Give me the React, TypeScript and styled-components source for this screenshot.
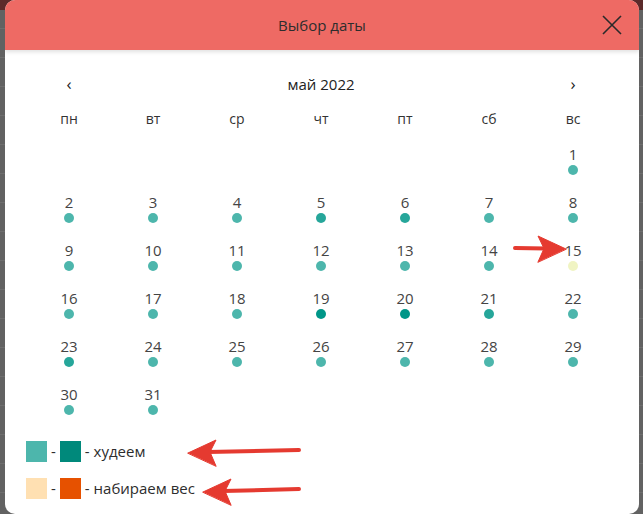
import React from "react";
import styled, { createGlobalStyle } from "styled-components";

const GlobalStyle = createGlobalStyle`
  html, body { margin: 0; padding: 0; }
  body {
    width: 643px;
    height: 514px;
    overflow: hidden;
    font-family: "Open Sans", "Noto Sans", sans-serif;
    background:
      linear-gradient(#5b2a2a 0, #5b2a2a 10px, transparent 10px),
      repeating-linear-gradient(#626262 0, #626262 28px, #6e6e6e 28px, #6e6e6e 29px);
    background-color: #636363;
  }
`;

const Page = styled.div`
  position: relative;
  width: 643px;
  height: 514px;
  padding: 0 4px 0 5px;
  box-sizing: border-box;
`;

const Modal = styled.div`
  width: 634px;
  height: 514px;
  background: #fff;
  border-radius: 10px;
  overflow: hidden;
  display: flex;
  flex-direction: column;
`;

const Header = styled.div`
  height: 50px;
  flex: none;
  background: #ee6a64;
  box-shadow: 0 2px 4px rgba(0, 0, 0, 0.12);
  display: grid;
  grid-template-columns: 1fr auto 1fr;
  align-items: center;
  position: relative;
  z-index: 1;
`;

const Title = styled.div`
  grid-column: 2;
  font-size: 15px;
  color: #2d2d2d;
  line-height: 20px;
`;

const Close = styled.button`
  grid-column: 3;
  justify-self: end;
  margin-right: 16px;
  width: 22px;
  height: 22px;
  padding: 0;
  border: 0;
  background: transparent;
  display: flex;
  align-items: center;
  justify-content: center;
`;

const Body = styled.div`
  padding: 16px 24px 0 22px;
  display: flex;
  flex-direction: column;
`;

const NavRow = styled.div`
  height: 36px;
  display: grid;
  grid-template-columns: 84px 1fr 84px;
  align-items: center;
  text-align: center;
`;

const NavArrow = styled.span`
  font-size: 17px;
  color: #222;
  line-height: 20px;
`;

const MonthLabel = styled.span`
  font-size: 15px;
  font-weight: 500;
  color: #222;
`;

const Grid = styled.div`
  display: grid;
  grid-template-columns: repeat(7, 84px);
`;

const WeekDay = styled.div`
  height: 36px;
  box-sizing: border-box;
  padding-bottom: 3px;
  display: flex;
  align-items: center;
  justify-content: center;
  font-size: 14px;
  color: #333;
`;

const DayCell = styled.div`
  height: 48px;
  box-sizing: border-box;
  padding-top: 6px;
  display: flex;
  flex-direction: column;
  align-items: center;
  gap: 1px;
`;

const DayNum = styled.span`
  font-size: 15px;
  line-height: 20px;
  color: #444;
`;

const Dot = styled.span<{ $color: string }>`
  width: 10px;
  height: 10px;
  border-radius: 50%;
  background: ${(p) => p.$color};
`;

const Legend = styled.div`
  margin-top: 15px;
  margin-left: -1px;
  display: flex;
  flex-direction: column;
  gap: 16px;
`;

const LegendRow = styled.div`
  display: flex;
  align-items: center;
  gap: 4px;
  font-size: 15px;
  color: #2d2d2d;
  line-height: 21px;
`;

const Swatch = styled.span<{ $color: string }>`
  width: 21px;
  height: 21px;
  background: ${(p) => p.$color};
`;

const Annotations = styled.svg`
  position: absolute;
  left: 0;
  top: 0;
  pointer-events: none;
`;

const LIGHT = "#4db6ac";
const MID = "#26a69a";
const DARK = "#009688";
const TODAY = "#f0f4c3";

const special: Record<number, string> = {
  5: MID,
  6: MID,
  15: TODAY,
  19: DARK,
  20: DARK,
  21: MID,
  23: MID,
};

const weekDays = ["пн", "вт", "ср", "чт", "пт", "сб", "вс"];

export default function App() {
  const offset = 6; // May 1, 2022 is Sunday
  const cells: (number | null)[] = [];
  for (let i = 0; i < offset; i++) cells.push(null);
  for (let d = 1; d <= 31; d++) cells.push(d);

  return (
    <>
      <GlobalStyle />
      <Page>
        <Modal>
          <Header>
            <Title>Выбор даты</Title>
            <Close aria-label="close">
              <svg width="20" height="20" viewBox="0 0 20 20">
                <path d="M1 1 L19 19 M19 1 L1 19" stroke="#2a2a2a" strokeWidth="1.6" fill="none" />
              </svg>
            </Close>
          </Header>
          <Body>
            <NavRow>
              <NavArrow>‹</NavArrow>
              <MonthLabel>май 2022</MonthLabel>
              <NavArrow>›</NavArrow>
            </NavRow>
            <Grid>
              {weekDays.map((w) => (
                <WeekDay key={w}>{w}</WeekDay>
              ))}
              {cells.map((d, i) =>
                d === null ? (
                  <DayCell key={"e" + i} />
                ) : (
                  <DayCell key={d}>
                    <DayNum>{d}</DayNum>
                    <Dot $color={special[d] ?? LIGHT} />
                  </DayCell>
                )
              )}
            </Grid>
            <Legend>
              <LegendRow>
                <Swatch $color="#4db6ac" />
                <span>-</span>
                <Swatch $color="#00897b" />
                <span>- худеем</span>
              </LegendRow>
              <LegendRow>
                <Swatch $color="#ffe0b2" />
                <span>-</span>
                <Swatch $color="#e65100" />
                <span>- набираем вес</span>
              </LegendRow>
            </Legend>
          </Body>
        </Modal>
        <Annotations width="643" height="514" viewBox="0 0 643 514">
          <g fill="#e53a30" stroke="#e53a30" strokeLinecap="round">
            <line x1="299" y1="450" x2="208" y2="452" strokeWidth="4" />
            <polygon points="188,453 216,440 210,452 216,466" strokeWidth="1" strokeLinejoin="round" />
            <line x1="299" y1="489" x2="223" y2="491" strokeWidth="4" />
            <polygon points="203,492 231,479 225,491 231,505" strokeWidth="1" strokeLinejoin="round" />
            <line x1="515" y1="248" x2="546" y2="248.5" strokeWidth="4" />
            <polygon points="566,249 538,236 544,248.5 538,262" strokeWidth="1" strokeLinejoin="round" />
          </g>
        </Annotations>
      </Page>
    </>
  );
}
